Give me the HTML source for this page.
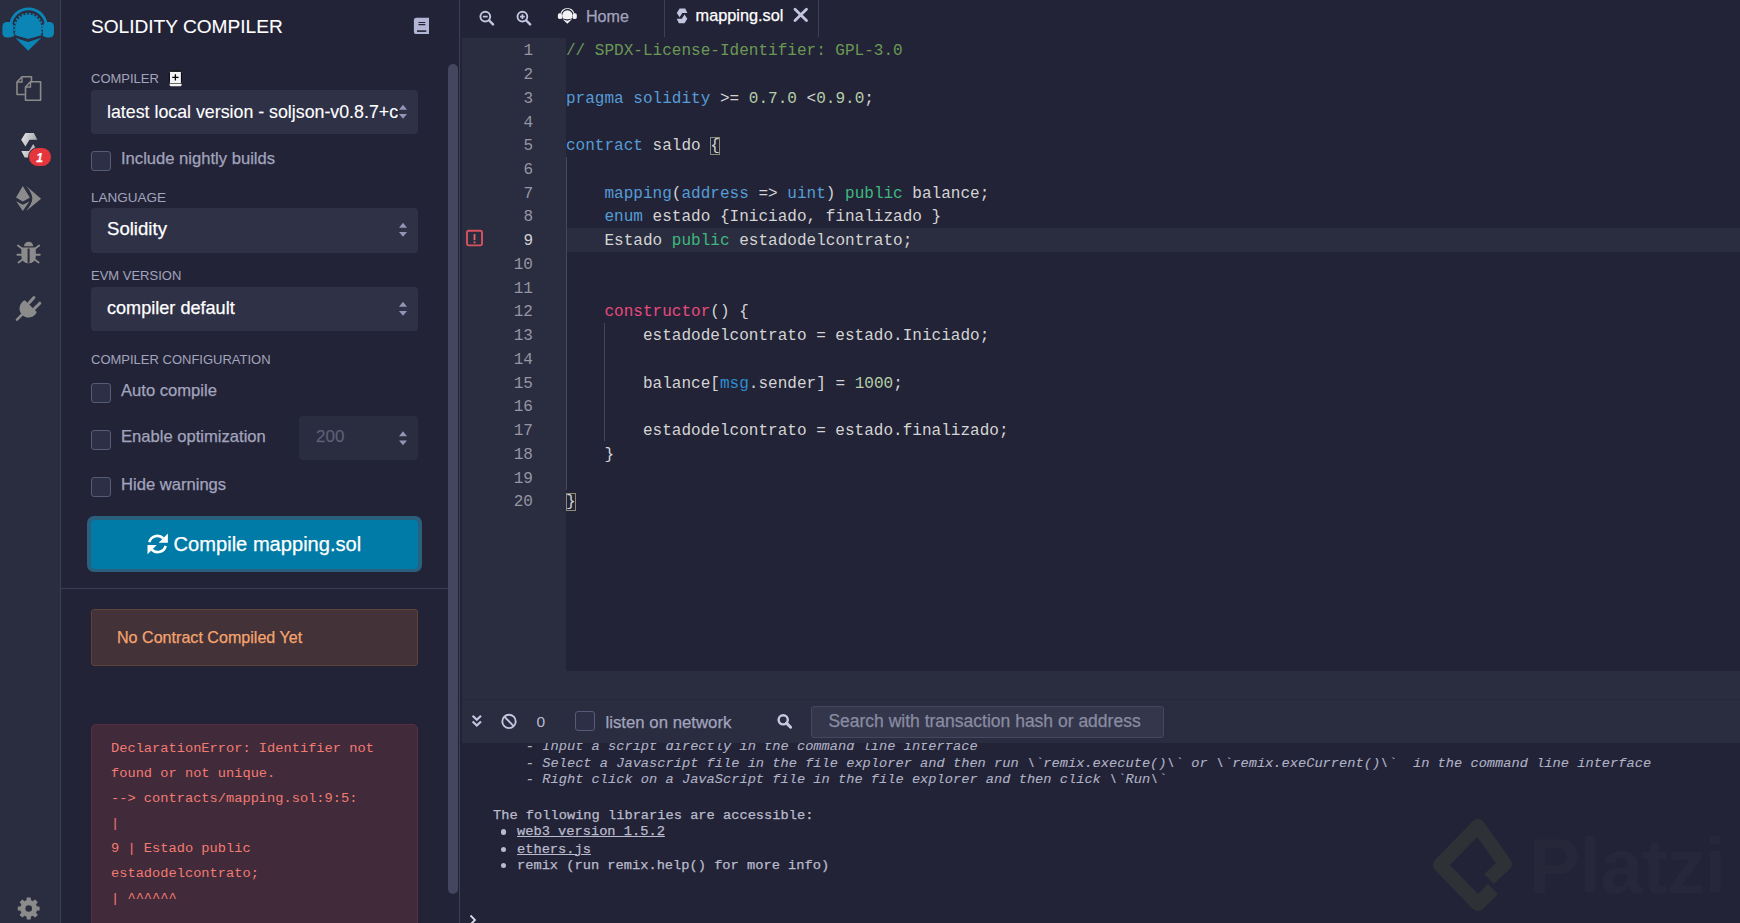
<!DOCTYPE html>
<html><head><meta charset="utf-8">
<style>
*{margin:0;padding:0;box-sizing:border-box}
html,body{width:1740px;height:923px;overflow:hidden;background:#222336;font-family:"Liberation Sans",sans-serif}
.a{position:absolute}
.t{position:absolute;white-space:nowrap;line-height:1;-webkit-text-stroke:0.25px currentColor}
.m{font-family:"Liberation Mono",monospace}
#icons{left:0;top:0;width:60px;height:923px;background:#2a2c3f}
#vline1{left:60px;top:0;width:1px;height:923px;background:#3d3f55}
.lbl{font-size:13px;color:#a2a3bd;-webkit-text-stroke:0}
.sel{background:#2f3147;border-radius:4px}
.cb{width:20px;height:20px;border:1px solid #585b76;background:#2d2f46;border-radius:3px}
.ck{font-size:16.6px;color:#a2a3bd}
.code{font-family:"Liberation Mono",monospace;font-size:16.05px;color:#d4d4d4;line-height:1}
.kw{color:#569cd6}.pb{color:#3eb87e}.cm{color:#6a9955}.nu{color:#b5cea8}.ct{color:#e84a7f}.mg{color:#2d8fd0}
.ln{font-family:"Liberation Mono",monospace;font-size:16.05px;color:#9596a4;line-height:1;text-align:right;width:60px}
.bm{outline:1px solid #8a8c7a;outline-offset:-1px}
.term{font-family:"Liberation Mono",monospace;font-size:13.7px;color:#babbcc;line-height:1}
</style></head><body>

<!-- ICON PANEL -->
<div id="icons" class="a"></div>
<div id="vline1" class="a"></div>
<!-- logo -->
<svg class="a" style="left:0;top:0" width="60" height="60" viewBox="0 0 60 60">
 <defs><clipPath id="gc"><polygon points="0,0 60,0 60,30 43.5,34.6 28.3,38.7 13,34.6 0,30"/></clipPath></defs>
 <path d="M13.3,36.2 A17.9,17.9 0 1 1 43.7,36.2" fill="none" stroke="#0b85b5" stroke-width="2.9"/>
 <rect x="2.4" y="22" width="11" height="15.6" rx="4.5" fill="#0b85b5"/>
 <rect x="43" y="22" width="11" height="15.6" rx="4.5" fill="#0b85b5"/>
 <g clip-path="url(#gc)">
 <circle cx="28.3" cy="27.6" r="13.9" fill="none" stroke="#0b85b5" stroke-width="2" stroke-dasharray="2 1.65"/>
 <circle cx="28.3" cy="27.6" r="13" fill="#0b85b5"/>
 <rect x="15.3" y="27.6" width="26" height="12" fill="#0b85b5"/>
 </g>
 <polygon points="15.5,38 28.2,42.1 41.3,37.7 28.2,50.8" fill="#0b85b5"/>
</svg>
<!-- files -->
<svg class="a" style="left:14px;top:74px" width="30" height="30" viewBox="0 0 30 30">
 <path d="M10.8,20.5 L3,20.5 L3,8 L8,2.8 L17.5,2.8 L17.5,8.5" fill="none" stroke="#8b8b8b" stroke-width="1.6" stroke-linejoin="round"/>
 <path d="M3,8 L8,8 L8,2.8" fill="none" stroke="#8b8b8b" stroke-width="1.4"/>
 <path d="M11.5,13 L16.5,7.8 L26.6,7.8 L26.6,26.2 L11.5,26.2 Z" fill="none" stroke="#8b8b8b" stroke-width="1.6" stroke-linejoin="round"/>
 <path d="M11.5,13 L16.5,13 L16.5,7.8" fill="none" stroke="#8b8b8b" stroke-width="1.4"/>
</svg>
<!-- solidity -->
<svg class="a" style="left:0;top:120px" width="60" height="50" viewBox="0 120 60 50">
 <defs><linearGradient id="sg" x1="0" y1="0" x2="1" y2="0.3"><stop offset="0" stop-color="#e8e8ea"/><stop offset="1" stop-color="#a9a9ad"/></linearGradient></defs>
 <polygon points="25.4,133 33.9,133 37.3,139.7 29.5,139.7 25.4,146.5 21.2,139.7" fill="url(#sg)"/>
 <polygon points="33.2,157.6 24.7,157.6 21.3,150.9 29.1,150.9 33.2,144.1 37.4,150.9" fill="url(#sg)"/>
</svg>
<div class="a" style="left:28px;top:147px;width:24px;height:20px;border-radius:10px;background:#e5363d;border:1px solid #2a2c3f"></div>
<div class="t" style="left:36.3px;top:151.5px;font-size:12px;font-weight:bold;font-style:italic;color:#fff">1</div>
<!-- deploy -->
<svg class="a" style="left:14px;top:184px" width="30" height="30" viewBox="0 0 30 30">
 <polygon points="8.8,2 15.9,13.7 8.8,17.4 2,13.4" fill="#8b8b8b"/>
 <polygon points="2.2,17.2 8.8,20.8 15.4,17.4 8.8,26.9" fill="#8b8b8b"/>
 <path d="M12.2,2 L27.1,14.8 L12.2,26.9 C16,22 18.3,18 18.3,14.4 C18.3,10.5 16,6.5 12.2,2 Z" fill="#8b8b8b"/>
</svg>
<!-- bug -->
<svg class="a" style="left:14px;top:238px" width="30" height="30" viewBox="0 0 30 30">
 <path d="M10,8.3 A4.6,4.5 0 0 1 19.2,8.3 Z" fill="#8b8b8b"/>
 <path d="M7.4,9.4 L21.8,9.4 L21.8,19 A7.2,6.3 0 0 1 7.4,19 Z" fill="#8b8b8b"/>
 <rect x="13.6" y="10.6" width="2" height="14.2" fill="#2a2c3f"/>
 <path d="M7.6,16.7 L3.4,16.7 M21.6,16.7 L25.8,16.7 M8.6,11 L4,7.6 M20.6,11 L25.2,7.6 M8.6,21.5 L4.6,24.4 M20.6,21.5 L24.6,24.4" stroke="#8b8b8b" stroke-width="1.9" stroke-linecap="round"/>
</svg>
<!-- plug -->
<svg class="a" style="left:14px;top:294px" width="30" height="30" viewBox="0 0 30 30">
 <path d="M10.88,6.27 L22.8,18 A9,9 0 1 1 10.88,6.27 Z" fill="#8b8b8b"/>
 <path d="M3,25.6 L9,19.6" stroke="#8b8b8b" stroke-width="2.6" stroke-linecap="round"/>
 <path d="M15,9 L20,3.6 M20.5,14.5 L25.8,9.2" stroke="#8b8b8b" stroke-width="3" stroke-linecap="round"/>
</svg>
<!-- gear -->
<svg class="a" style="left:0;top:880px" width="60" height="43" viewBox="0 880 60 43">
 <rect x="26.6" y="897.6" width="4.2" height="5" rx="0.6" fill="#8b8b8b" transform="rotate(0 28.7 908.5)"/><rect x="26.6" y="897.6" width="4.2" height="5" rx="0.6" fill="#8b8b8b" transform="rotate(45 28.7 908.5)"/><rect x="26.6" y="897.6" width="4.2" height="5" rx="0.6" fill="#8b8b8b" transform="rotate(90 28.7 908.5)"/><rect x="26.6" y="897.6" width="4.2" height="5" rx="0.6" fill="#8b8b8b" transform="rotate(135 28.7 908.5)"/><rect x="26.6" y="897.6" width="4.2" height="5" rx="0.6" fill="#8b8b8b" transform="rotate(180 28.7 908.5)"/><rect x="26.6" y="897.6" width="4.2" height="5" rx="0.6" fill="#8b8b8b" transform="rotate(225 28.7 908.5)"/><rect x="26.6" y="897.6" width="4.2" height="5" rx="0.6" fill="#8b8b8b" transform="rotate(270 28.7 908.5)"/><rect x="26.6" y="897.6" width="4.2" height="5" rx="0.6" fill="#8b8b8b" transform="rotate(315 28.7 908.5)"/>
 <circle cx="28.7" cy="908.5" r="8.5" fill="#8b8b8b"/>
 <circle cx="28.7" cy="908.5" r="3.3" fill="#2a2c3f"/>
</svg>
<!-- SIDE PANEL -->
<div class="t" style="left:91px;top:16.8px;font-size:19.1px;color:#fff;-webkit-text-stroke:0.1px #fff">SOLIDITY COMPILER</div>
<div class="t lbl" style="left:91px;top:72.3px">COMPILER</div>
<div class="a sel" style="left:91px;top:90px;width:327px;height:44px"></div>
<div class="a" style="left:107px;top:95px;width:291px;height:32px;overflow:hidden"><div class="t" style="left:0;top:9.1px;font-size:17.8px;color:#fff;-webkit-text-stroke:0.12px #fff">latest local version - soljson-v0.8.7+c</div></div>
<div class="a cb" style="left:91px;top:151px"></div>
<div class="t ck" style="left:121px;top:151px">Include nightly builds</div>

<div class="t lbl" style="left:91px;top:190.6px;font-size:13.5px">LANGUAGE</div>
<div class="a sel" style="left:91px;top:208px;width:327px;height:45px"></div>
<div class="t" style="left:107px;top:220px;font-size:18.6px;color:#fff">Solidity</div>

<div class="t lbl" style="left:91px;top:269.3px">EVM VERSION</div>
<div class="a sel" style="left:91px;top:287px;width:327px;height:44px"></div>
<div class="t" style="left:107px;top:298.6px;font-size:18.1px;color:#fff">compiler default</div>

<div class="t lbl" style="left:91px;top:352.6px">COMPILER CONFIGURATION</div>
<div class="a cb" style="left:91px;top:383px"></div>
<div class="t ck" style="left:121px;top:383px">Auto compile</div>
<div class="a cb" style="left:91px;top:430px"></div>
<div class="t ck" style="left:121px;top:429.4px">Enable optimization</div>
<div class="a" style="left:299px;top:416px;width:119px;height:44px;background:#2a2c3f;border-radius:4px"></div>
<div class="t" style="left:316px;top:428px;font-size:17px;color:#5c5f78">200</div>
<div class="a cb" style="left:91px;top:477px"></div>
<div class="t ck" style="left:121px;top:477px">Hide warnings</div>

<div class="a" style="left:87px;top:516px;width:335px;height:56px;border-radius:7px;background:#2b5f7e"></div>
<div class="a" style="left:91px;top:519.5px;width:327px;height:49px;border-radius:4px;background:#007aa6"></div>
<div class="t" style="left:173.6px;top:534.3px;font-size:20.1px;color:#fff">Compile mapping.sol</div>

<div class="a" style="left:61px;top:588px;width:387px;height:1px;background:#3b3d53"></div>

<div class="a" style="left:91px;top:609px;width:327px;height:57px;background:#433237;border:1px solid #5e4339;border-radius:3px"></div>
<div class="t" style="left:117px;top:628.8px;font-size:16.1px;color:#f5a46e">No Contract Compiled Yet</div>

<div class="a" style="left:91px;top:724px;width:327px;height:220px;background:#412a3a;border:1px solid #563042;border-radius:5px"></div>

<div class="a m" style="left:111px;top:735.9px;font-size:13.7px;line-height:25px;color:#f27b72;white-space:pre">DeclarationError: Identifier not
found or not unique.
--&gt; contracts/mapping.sol:9:5:
|
9 | Estado public
estadodelcontrato;
| ^^^^^^</div>

<!-- side icons -->
<svg class="a" style="left:410px;top:14px" width="24" height="24" viewBox="410 14 24 24">
 <path d="M416.5,17.8 L429,17.8 L429,34 L416.5,34 A2.6,2.6 0 0 1 413.9,31.4 L413.9,20.4 A2.6,2.6 0 0 1 416.5,17.8 Z" fill="#b2b5d6"/>
 <path d="M418.5,22.5 L425.3,22.5 M418.5,24.6 L425.3,24.6" stroke="#222336" stroke-width="1.1"/>
 <path d="M417,31.1 L426.3,31.1" stroke="#222336" stroke-width="1.6"/>
</svg>
<svg class="a" style="left:166px;top:68px" width="20" height="22" viewBox="166 68 20 22">
 <rect x="169.4" y="71.3" width="12" height="12.5" rx="1.2" fill="#f4f4f6" stroke="#000" stroke-width="1"/>
 <path d="M172.2,77.4 L178.6,77.4 M175.4,74.2 L175.4,80.6" stroke="#000" stroke-width="1.3"/>
 <path d="M169.6,83.8 L181.6,83.8 L181.6,84.8 A1.5,1.5 0 0 1 180.1,86.3 L171.1,86.3 A1.5,1.5 0 0 1 169.6,84.8 Z" fill="#f4f4f6"/>
</svg>
<svg class="a" style="left:395px;top:100px" width="16" height="300" viewBox="395 100 16 300">
 <polygon points="399,109.7 407,109.7 403,104.7" fill="#9296b5"/><polygon points="399,114 407,114 403,118.8" fill="#9296b5"/>
 <polygon points="399,227.7 407,227.7 403,222.7" fill="#9296b5"/><polygon points="399,232 407,232 403,236.8" fill="#9296b5"/>
 <polygon points="399,306.7 407,306.7 403,301.7" fill="#9296b5"/><polygon points="399,311 407,311 403,315.8" fill="#9296b5"/>
</svg>
<svg class="a" style="left:395px;top:425px" width="16" height="25" viewBox="395 425 16 25">
 <polygon points="399,436.2 407,436.2 403,431.2" fill="#9296b5"/><polygon points="399,440.5 407,440.5 403,445.3" fill="#9296b5"/>
</svg>
<svg class="a" style="left:146.5px;top:532.5px" width="22" height="22" viewBox="0 0 22 22">
 <path d="M2.3,9.2 A8.4,8.4 0 0 1 16.2,5.2" fill="none" stroke="#fff" stroke-width="2.6"/>
 <polygon points="20.9,0.5 20.9,9.8 11.6,9.8" fill="#fff"/>
 <path d="M18.7,12.8 A8.4,8.4 0 0 1 4.8,16.8" fill="none" stroke="#fff" stroke-width="2.6"/>
 <polygon points="0.5,21.3 0.5,12 9.8,12" fill="#fff"/>
</svg>
<!-- side scrollbar -->
<div class="a" style="left:448px;top:64px;width:10px;height:830px;background:#43465e;border-radius:5px"></div>
<div class="a" style="left:459px;top:0;width:1px;height:923px;background:#3d3f55"></div>

<!-- MAIN -->
<!-- tab icons -->
<svg class="a" style="left:470px;top:0" width="70" height="38" viewBox="470 0 70 38">
 <circle cx="485.3" cy="16.6" r="4.9" fill="none" stroke="#c3c5e0" stroke-width="1.9"/>
 <path d="M489.2,20.5 L493,24.4" stroke="#c3c5e0" stroke-width="2.5" stroke-linecap="round"/>
 <path d="M482.9,16.6 L487.7,16.6" stroke="#c3c5e0" stroke-width="1.7"/>
 <circle cx="522.4" cy="16.6" r="4.9" fill="none" stroke="#c3c5e0" stroke-width="1.9"/>
 <path d="M526.3,20.5 L530.1,24.4" stroke="#c3c5e0" stroke-width="2.5" stroke-linecap="round"/>
 <path d="M520,16.6 L524.8,16.6 M522.4,14.2 L522.4,19" stroke="#c3c5e0" stroke-width="1.7"/>
</svg>
<svg class="a" style="left:556.5px;top:5.2px" width="22" height="21" viewBox="0 0 60 56">
 <defs><clipPath id="gc2"><polygon points="0,0 60,0 60,30 43.5,34.6 28.3,38.7 13,34.6 0,30"/></clipPath></defs>
 <path d="M13.3,36.2 A17.9,17.9 0 1 1 43.7,36.2" fill="none" stroke="#f2f2f4" stroke-width="3.2"/>
 <rect x="2.4" y="22" width="11" height="15.6" rx="4.5" fill="#f2f2f4"/>
 <rect x="43" y="22" width="11" height="15.6" rx="4.5" fill="#f2f2f4"/>
 <g clip-path="url(#gc2)"><circle cx="28.3" cy="27.6" r="14" fill="#f2f2f4"/><rect x="15.3" y="27.6" width="26" height="12" fill="#f2f2f4"/></g>
 <polygon points="15.5,38 28.2,42.1 41.3,37.7 28.2,50.8" fill="#f2f2f4"/>
</svg>
<svg class="a" style="left:670px;top:0" width="150" height="38" viewBox="670 0 150 38">
 <polygon points="679.6,8.5 685.2,8.5 687.4,12.9 682.3,12.9 679.6,17.3 676.8,12.9" fill="#c3c5e0"/>
 <polygon points="684.5,23.2 678.9,23.2 676.7,18.8 681.8,18.8 684.5,14.4 687.3,18.8" fill="#c3c5e0"/>
 <path d="M795,9.2 L806.5,20.5 M806.5,9.2 L795,20.5" stroke="#c3c5e0" stroke-width="2.8" stroke-linecap="round"/>
</svg>

<div class="a" style="left:462px;top:38px;width:104px;height:633px;background:#2a2c3f"></div>
<div class="a" style="left:566px;top:228px;width:1174px;height:24px;background:#2a2c3f"></div>
<div class="a" style="left:462px;top:671px;width:1278px;height:28px;background:#2a2c3f"></div>
<div class="a" style="left:462px;top:699px;width:1278px;height:44px;background:#2a2c3f;border-top:1px solid #26283b"></div>

<div class="t" style="left:586px;top:7.8px;font-size:16.1px;color:#a2a3bd">Home</div>
<div class="t" style="left:695.6px;top:6.8px;font-size:16.3px;color:#fff">mapping.sol</div>
<div class="a" style="left:664px;top:0;width:1px;height:37px;background:#3d3f55"></div>
<div class="a" style="left:818px;top:0;width:1px;height:37px;background:#3d3f55"></div>


<svg class="a" style="left:462px;top:700px" width="350" height="42" viewBox="462 700 350 42">
 <path d="M472.6,715.8 L476.8,719.8 L481,715.8 M472.6,721.5 L476.8,725.5 L481,721.5" fill="none" stroke="#c3c6e0" stroke-width="2.2"/>
 <circle cx="509" cy="721.4" r="6.7" fill="none" stroke="#c3c6e0" stroke-width="1.9"/>
 <path d="M504.3,716.7 L513.7,726.1" stroke="#c3c6e0" stroke-width="1.9"/>
 <circle cx="783.2" cy="719.8" r="4.6" fill="none" stroke="#c8cadf" stroke-width="2.4"/>
 <path d="M786.5,723.1 L790.6,727.2" stroke="#c8cadf" stroke-width="3" stroke-linecap="round"/>
</svg>
<div class="t" style="left:605.5px;top:714.8px;font-size:16.8px;color:#a2a3bd">listen on network</div>
<div class="a cb" style="left:575px;top:711px"></div>
<div class="t" style="left:536.5px;top:714px;font-size:15.5px;color:#b9bbd0;-webkit-text-stroke:0">0</div>
<div class="a" style="left:811px;top:706px;width:353px;height:32px;background:#34364b;border:1px solid #45475e;border-radius:3px"></div>
<div class="t" style="left:828.4px;top:713.2px;font-size:17.5px;color:#8a8ca2">Search with transaction hash or address</div>

<svg class="a" style="left:464px;top:227px" width="22" height="22" viewBox="464 227 22 22">
 <rect x="467" y="230.8" width="15" height="14.6" rx="1.8" fill="none" stroke="#d9535e" stroke-width="1.9"/>
 <path d="M474.5,234 L474.5,240.2" stroke="#e0606a" stroke-width="1.9"/>
 <rect x="473.6" y="241.5" width="1.8" height="1.8" fill="#e0606a"/>
</svg>
<div class="a ln" style="left:473px;top:40.3px;line-height:23.74px;white-space:pre">1
2
3
4
5
6
7
8
<span style="color:#d4d4d4">9</span>
10
11
12
13
14
15
16
17
18
19
20</div>
<div class="a" style="left:566px;top:157px;width:1px;height:333px;background:#44465a"></div>
<div class="a" style="left:604px;top:323px;width:1px;height:118px;background:#44465a"></div>
<div class="a code" style="left:566px;top:40.3px;line-height:23.74px;white-space:pre"><span class="cm">// SPDX-License-Identifier: GPL-3.0</span>
 
<span class="kw">pragma</span> <span class="kw">solidity</span> &gt;= <span class="nu">0.7.0</span> &lt;<span class="nu">0.9.0</span>;
 
<span class="kw">contract</span> saldo <span class="bm">{</span>
 
    <span class="kw">mapping</span>(<span class="kw">address</span> =&gt; <span class="kw">uint</span>) <span class="pb">public</span> balance;
    <span class="kw">enum</span> estado {Iniciado, finalizado }
    Estado <span class="pb">public</span> estadodelcontrato;
 
 
    <span class="ct">constructor</span>() {
        estadodelcontrato = estado.Iniciado;
 
        balance[<span class="mg">msg</span>.sender] = <span class="nu">1000</span>;
 
        estadodelcontrato = estado.finalizado;
    }
 
<span class="bm">}</span></div>
<div class="a" style="left:461px;top:743px;width:1279px;height:180px;overflow:hidden">
<div class="t term" style="left:32px;top:-3.5px;font-style:italic;white-space:pre;color:#b0b2c6;-webkit-text-stroke:0.1px currentColor">    - Input a script directly in the command line interface</div>
<div class="t term" style="left:32px;top:13.5px;font-style:italic;white-space:pre;color:#b0b2c6;-webkit-text-stroke:0.1px currentColor">    - Select a Javascript file in the file explorer and then run \`remix.execute()\` or \`remix.exeCurrent()\`  in the command line interface</div>
<div class="t term" style="left:32px;top:29.6px;font-style:italic;white-space:pre;color:#b0b2c6;-webkit-text-stroke:0.1px currentColor">    - Right click on a JavaScript file in the file explorer and then click \`Run\`</div>
<div class="t term" style="left:32px;top:66.1px;white-space:pre">The following libraries are accessible:</div>
<div class="a" style="left:39.7px;top:86.3px;width:5.5px;height:5.5px;border-radius:50%;background:#babbcc"></div>
<div class="t term" style="left:56px;top:82.4px;white-space:pre;text-decoration:underline">web3 version 1.5.2</div>
<div class="a" style="left:39.7px;top:103.5px;width:5.5px;height:5.5px;border-radius:50%;background:#babbcc"></div>
<div class="t term" style="left:56px;top:99.6px;white-space:pre;text-decoration:underline">ethers.js</div>
<div class="a" style="left:39.7px;top:119.7px;width:5.5px;height:5.5px;border-radius:50%;background:#babbcc"></div>
<div class="t term" style="left:56px;top:115.8px;white-space:pre">remix (run remix.help() for more info)</div>
</div>

<!-- watermark -->
<svg class="a" style="left:1400px;top:780px" width="340" height="143" viewBox="1400 780 340 143">
 <path d="M1489,879 L1505,864 L1478,826 L1440,865 L1478,904 L1493,889" fill="none" stroke="#2e3135" stroke-width="14" stroke-linejoin="round"/>
</svg>
<div class="t" style="left:1529px;top:828px;font-size:77px;font-weight:bold;color:#262839;-webkit-text-stroke:0;letter-spacing:-0.8px">Platzi</div>
<svg class="a" style="left:466px;top:911px" width="14" height="15" viewBox="0 0 14 15"><path d="M4.5,4.5 L9,9 L4.5,13.5" fill="none" stroke="#d8d9e6" stroke-width="1.8"/></svg>
</body></html>
